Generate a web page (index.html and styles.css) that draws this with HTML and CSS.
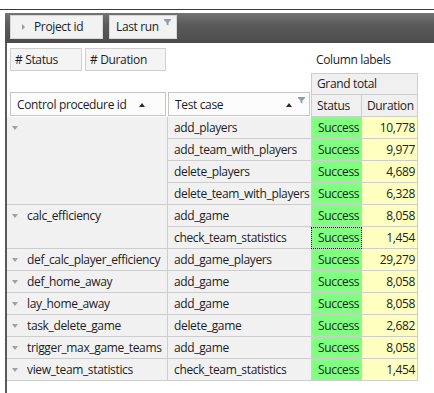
FILE: index.html
```html
<!DOCTYPE html>
<html>
<head>
<meta charset="utf-8">
<link rel="stylesheet" href="styles.css">
</head>
<body>
<div class="frame">
  <div class="panel">
    <div class="toolbar">
      <div class="tbtn tbtn-project"><span class="expand-right"></span>Project id</div>
      <div class="tbtn tbtn-lastrun">Last run
        <svg class="funnel" width="7" height="7" viewBox="0 0 7 7"><path d="M0 0H7V1L4.5 3.5V6.5L2.5 5.5V3.5L0 1Z" fill="#8c9cb2"/></svg>
      </div>
    </div>
    <div class="pivot">
      <div class="fields">
        <div class="fbtn fbtn-status"># Status</div>
        <div class="fbtn fbtn-duration"># Duration</div>
      </div>
      <div class="collabels">Column labels</div>
      <div class="rh rh-cp">Control procedure id<span class="sort-up"></span></div>
      <div class="rh rh-tc">Test case<span class="sort-up"></span>
        <svg class="funnel funnel-h" width="7" height="7" viewBox="0 0 7 7"><path d="M0 0H7V1L4.5 3.5V6.5L2.5 5.5V3.5L0 1Z" fill="#8c9cb2"/></svg>
      </div>
      <div class="hc grand">Grand total</div>
      <div class="hc h-status">Status</div>
      <div class="hc h-duration">Duration</div>

      <div class="g span4"><span class="expand"></span></div>
      <div class="t">add_players</div><div class="s">Success</div><div class="d">10,778</div>
      <div class="t">add_team_with_players</div><div class="s">Success</div><div class="d">9,977</div>
      <div class="t">delete_players</div><div class="s">Success</div><div class="d">4,689</div>
      <div class="t">delete_team_with_players</div><div class="s">Success</div><div class="d">6,328</div>

      <div class="g span2"><span class="expand"></span>calc_efficiency</div>
      <div class="t">add_game</div><div class="s">Success</div><div class="d">8,058</div>
      <div class="t">check_team_statistics</div><div class="s focus">Success</div><div class="d">1,454</div>

      <div class="g"><span class="expand"></span>def_calc_player_efficiency</div>
      <div class="t">add_game_players</div><div class="s">Success</div><div class="d">29,279</div>

      <div class="g"><span class="expand"></span>def_home_away</div>
      <div class="t">add_game</div><div class="s">Success</div><div class="d">8,058</div>

      <div class="g"><span class="expand"></span>lay_home_away</div>
      <div class="t">add_game</div><div class="s">Success</div><div class="d">8,058</div>

      <div class="g"><span class="expand"></span>task_delete_game</div>
      <div class="t">delete_game</div><div class="s">Success</div><div class="d">2,682</div>

      <div class="g"><span class="expand"></span>trigger_max_game_teams</div>
      <div class="t">add_game</div><div class="s">Success</div><div class="d">8,058</div>

      <div class="g"><span class="expand"></span>view_team_statistics</div>
      <div class="t">check_team_statistics</div><div class="s">Success</div><div class="d">1,454</div>
    </div>
  </div>
</div>
</body>
</html>
```

FILE: styles.css
```css
* { box-sizing: border-box; }
html, body { margin: 0; padding: 0; background: #fff; }
body {
  font-family: "Open Sans", "Noto Sans", sans-serif;
  font-size: 12px;
  letter-spacing: -0.35px;
  color: #1c1c26;
  overflow: hidden;
}
.frame {
  margin-top: 9px;
  border-top: 1px solid #3c3c3c;
  padding-top: 3px;
  height: 384px;
}
.panel {
  margin-left: 5px;
  border-left: 2px solid #5a5a5a;
  height: 100%;
}
.toolbar {
  height: 30px;
  background: linear-gradient(#747474, #5a5a5a 40%, #4c4c4c);
  display: flex;
  gap: 6px;
  padding: 2px 0 0 5px;
  margin-left: -2px;
}
.tbtn {
  height: 24px;
  background: #f2f2f2;
  border: 1px solid #d6d6d6;
  display: flex;
  align-items: center;
  position: relative;
  line-height: 1;
}
.tbtn-project { width: 93px; padding-left: 11px; }
.tbtn-lastrun { width: 68px; padding-left: 6px; }
.expand-right {
  width: 0; height: 0;
  border-top: 3px solid transparent;
  border-bottom: 3px solid transparent;
  border-left: 3px solid #9a9a9a;
  margin-right: 9px;
}
.funnel { position: absolute; right: 5px; top: 3px; }
.pivot {
  display: grid;
  grid-template-columns: 161px 143px 51px 56px;
  grid-template-rows: 30px 22px 22px repeat(12, 22px);
}
.fields {
  grid-column: 1 / 3;
  grid-row: 1;
  display: flex;
  gap: 3px;
  padding: 5px 0 0 3px;
}
.fbtn {
  height: 23px;
  background: #f4f4f4;
  border: 1px solid #cfcfcf;
  display: flex;
  align-items: center;
  padding-left: 4px;
}
.fbtn-status { width: 72px; }
.fbtn-duration { width: 81px; }
.collabels {
  grid-column: 3 / 5;
  grid-row: 1;
  padding: 8px 0 0 5px;
  white-space: nowrap;
}
.rh {
  grid-row: 2 / 4;
  align-self: end;
  height: 24px;
  margin-bottom: 1px;
  background: #fcfcfc;
  border: 1px solid #c6c6c6;
  display: flex;
  align-items: center;
  padding-left: 6px;
  position: relative;
}
.rh-cp { grid-column: 1; margin-left: 3px; margin-right: 2px; }
.rh-tc { grid-column: 2; margin-right: 1px; }
.sort-up {
  position: absolute;
  top: 10px;
  width: 0; height: 0;
  border-left: 3.5px solid transparent;
  border-right: 3.5px solid transparent;
  border-bottom: 4px solid #2a2a2a;
}
.rh-cp .sort-up { left: 128px; }
.rh-tc .sort-up { left: 117px; }
.funnel-h { right: 4px; top: 4px; }
.hc {
  background: #f0f0f0;
  border-bottom: 1px solid #cdcdcd;
  border-right: 1px solid #cdcdcd;
  line-height: 21px;
  padding-left: 5px;
  white-space: nowrap;
}
.grand {
  grid-column: 3 / 5;
  grid-row: 2;
  border-top: 1px solid #cdcdcd;
  border-left: 1px solid #cdcdcd;
  line-height: 20px;
}
.h-status { grid-column: 3; grid-row: 3; border-left: 1px solid #cdcdcd; }
.h-duration { grid-column: 4; grid-row: 3; }
.g, .t, .s, .d {
  line-height: 21px;
  border-bottom: 1px solid #cdcdcd;
  white-space: nowrap;
}
.g {
  grid-column: 1;
  background: #f1f1f1;
  border-right: 1px solid #cdcdcd;
  padding-left: 5px;
  display: flex;
  align-items: flex-start;
}
.span4 { grid-row: span 4; }
.span2 { grid-row: span 2; }
.expand {
  width: 0; height: 0;
  margin-top: 9px;
  margin-right: 9px;
  border-left: 3px solid transparent;
  border-right: 3px solid transparent;
  border-top: 4px solid #a0a0a0;
  flex: none;
}
.t {
  grid-column: 2;
  background: #f1f1f1;
  padding-left: 6px;
}
.s {
  grid-column: 3;
  background: #80ff80;
  border-left: 1px solid #cdcdcd;
  border-right: 1px solid #cdcdcd;
  padding-left: 6px;
}
.s.focus {
  outline: 1px dotted #222;
  outline-offset: -1px;
}
.d {
  grid-column: 4;
  background: #ffffc0;
  border-right: 1px solid #cdcdcd;
  text-align: right;
  padding-right: 2px;
}
```
